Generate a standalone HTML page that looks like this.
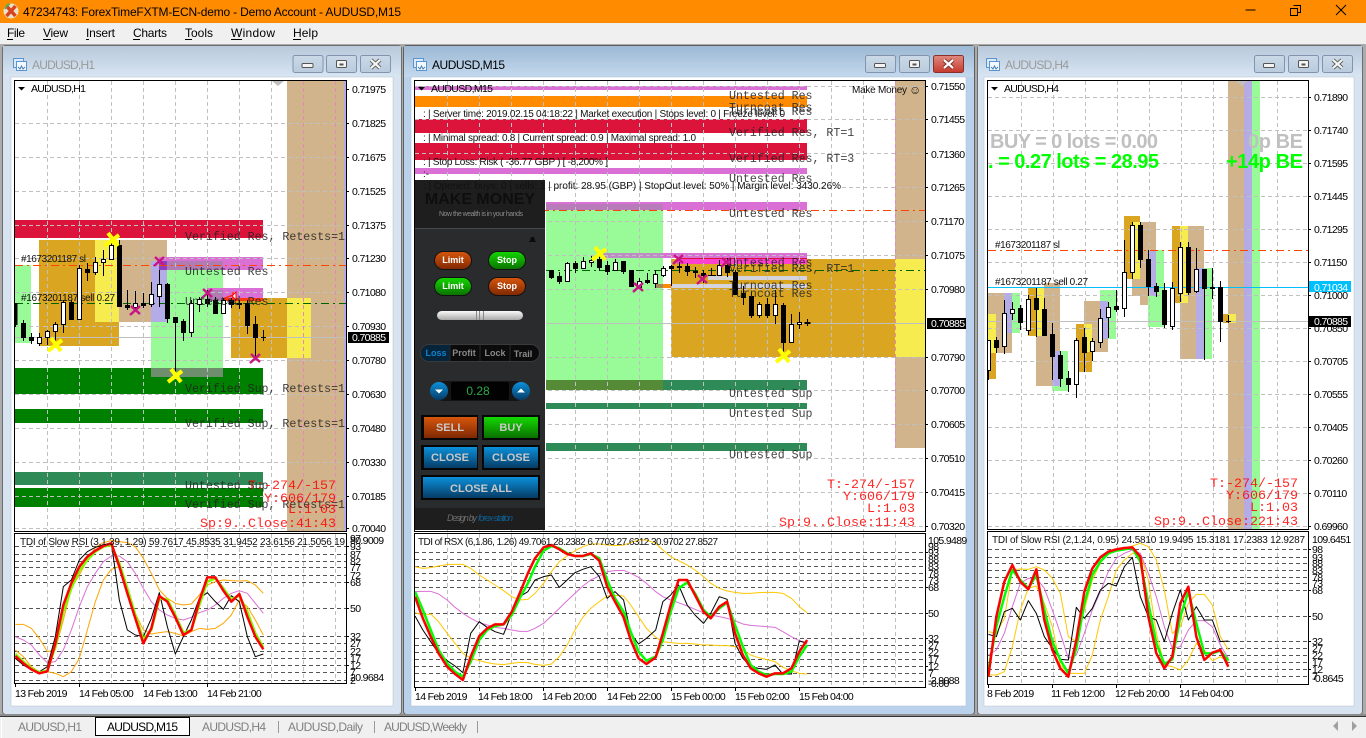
<!DOCTYPE html>
<html><head><meta charset="utf-8"><title>MT4</title>
<style>
html,body{margin:0;padding:0;background:#ababab;overflow:hidden}
svg{display:block}
text{font-family:"Liberation Sans",sans-serif}
.t{font-size:10.5px;letter-spacing:-.65px;fill:#000}
.w{font-size:10.5px;letter-spacing:-.65px;fill:#fff}
.o{font-size:10px;fill:#111}
.m{font-family:"Liberation Mono",monospace;font-size:11.6px;fill:#222;fill-opacity:.85}
.r{font-family:"Liberation Mono",monospace;font-size:13.33px;fill:#f00;fill-opacity:.85;text-anchor:end}
.mn{font-size:12px;fill:#000}
.g{fill:none;stroke:#c0c0c0;stroke-width:1;stroke-dasharray:4 3}
.d{fill:none;stroke:#555;stroke-width:1;stroke-dasharray:4 3}
.k{fill:none;stroke:#000;stroke-width:1}
.b{fill:#000;stroke:#000;stroke-width:1}
.h{fill:#fff;stroke:#000;stroke-width:1}
polyline{fill:none;vector-effect:non-scaling-stroke;stroke-linejoin:round}
.p1{font-size:9px;font-weight:bold;fill:#fff;text-anchor:middle}
.p2{font-size:11px;font-weight:bold;fill:#c8c8c8;text-anchor:middle}
</style></head><body>
<svg width="1366" height="738" viewBox="0 0 1366 738" xmlns="http://www.w3.org/2000/svg">
<defs>
<linearGradient id="ti" x1="0" y1="0" x2="0" y2="1"><stop offset="0" stop-color="#b8c9da"/><stop offset="1" stop-color="#d8e5f3"/></linearGradient>
<linearGradient id="ta" x1="0" y1="0" x2="0" y2="1"><stop offset="0" stop-color="#9cb8d4"/><stop offset="1" stop-color="#c4d9ee"/></linearGradient>
<linearGradient id="bt" x1="0" y1="0" x2="0" y2="1"><stop offset="0" stop-color="#ccd9e7"/><stop offset="1" stop-color="#b9cbdd"/></linearGradient>
<linearGradient id="bc" x1="0" y1="0" x2="0" y2="1"><stop offset="0" stop-color="#e08a80"/><stop offset="1" stop-color="#c63a2c"/></linearGradient>
<linearGradient id="red" x1="0" y1="0" x2="0" y2="1"><stop offset="0" stop-color="#d8560c"/><stop offset="1" stop-color="#7e2802"/></linearGradient>
<linearGradient id="grn" x1="0" y1="0" x2="0" y2="1"><stop offset="0" stop-color="#14d800"/><stop offset="1" stop-color="#0a7000"/></linearGradient>
<linearGradient id="blu" x1="0" y1="0" x2="0" y2="1"><stop offset="0" stop-color="#0b90da"/><stop offset="1" stop-color="#063c66"/></linearGradient>
<linearGradient id="sl" x1="0" y1="0" x2="0" y2="1"><stop offset="0" stop-color="#fafafa"/><stop offset="1" stop-color="#a8a8a8"/></linearGradient>
<g id="ic"><rect x="0.5" y="0.5" width="10" height="9" fill="#dbeafa" stroke="#5a95d0"/><rect x="3.5" y="3.5" width="10" height="9" fill="#f2f8fe" stroke="#5a95d0"/><path d="M5 9l2 2 1.500-3 1.500 3 2-2" fill="none" stroke="#4a7fb8"/></g>
<g id="bm"><rect x=".5" y=".5" width="30" height="17" rx="2" fill="url(#bt)" stroke="#8293ad"/><rect x="9.500" y="8.500" width="11" height="4" rx="1" fill="#f4f4f4" stroke="#555"/></g>
<g id="bx"><rect x=".5" y=".5" width="30" height="17" rx="2" fill="url(#bt)" stroke="#8293ad"/><rect x="10.500" y="5.500" width="10" height="7" rx="1" fill="#f4f4f4" stroke="#555"/><rect x="13.500" y="8.500" width="4" height="2" fill="#555"/></g>
<g id="bc1"><rect x=".5" y=".5" width="30" height="17" rx="2" fill="url(#bt)" stroke="#8293ad"/><path d="M11 5l9 8M20 5l-9 8" stroke="#555" stroke-width="4"/><path d="M11 5l9 8M20 5l-9 8" stroke="#f4f4f4" stroke-width="2.200"/></g>
<g id="bc2"><rect x=".5" y=".5" width="30" height="17" rx="2" fill="url(#bc)" stroke="#8a3028"/><path d="M11 5l9 8M20 5l-9 8" stroke="#7a2a22" stroke-width="4"/><path d="M11 5l9 8M20 5l-9 8" stroke="#fff" stroke-width="2.200"/></g>
<path id="xy" d="M-7 6L7-5M-4-7L6 6" fill="none" stroke="#ff0" stroke-width="4"/>
<path id="xm" d="M-5 5L5-4M-4-4L5 4" fill="none" stroke="#c71585" stroke-width="2.500"/>
<clipPath id="c3"><rect x="988" y="81" width="320" height="448"/></clipPath>
</defs>

<!-- background / chrome -->
<rect width="1366" height="738" fill="#ababab"/>
<rect width="1366" height="23" fill="#ff8c00"/>
<circle cx="11" cy="11" r="7.500" fill="#e9e2c8"/><path d="M6.500 6l9 10M15.500 6l-9 10" stroke="#d8431e" stroke-width="3.500"/><path d="M5 9a7 7 0 0 1 5-5" stroke="#6aa84f" stroke-width="2" fill="none"/>
<text x="23" y="16" font-size="12" textLength="378" lengthAdjust="spacing">47234743: ForexTimeFXTM-ECN-demo - Demo Account - AUDUSD,M15</text>
<path d="M1245.500 10h10" stroke="#000"/><path d="M1293.500 5.500h7v7h-3M1290.500 8.500h7v7h-7z" fill="none" stroke="#000"/><path d="M1336 5l10 10M1346 5l-10 10" stroke="#000"/>
<rect y="23" width="1366" height="21" fill="#f0f0f0"/>
<text class="mn" x="7" y="37" textLength="18">File</text><text class="mn" x="43" y="37" textLength="25">View</text><text class="mn" x="86" y="37" textLength="29">Insert</text><text class="mn" x="133" y="37" textLength="34">Charts</text><text class="mn" x="185" y="37" textLength="28">Tools</text><text class="mn" x="231" y="37" textLength="44">Window</text><text class="mn" x="293" y="37" textLength="25">Help</text>
<path d="M7 39.500h6M43 39.500h8M86 39.500h3M133 39.500h7M185 39.500h7M231 39.500h11M293 39.500h8" stroke="#000"/>

<!-- WINDOW 1 -->
<rect x="2.500" y="45.500" width="399" height="669" rx="3" fill="#d7e3f1" stroke="#6e6e6e"/>
<rect x="3" y="46" width="398" height="31" fill="url(#ti)"/>
<rect x="11" y="77" width="382" height="629" fill="#fff" stroke="#b4c0ce" stroke-width=".5"/>
<use href="#ic" x="13" y="58"/>
<text x="32" y="69" font-size="12" fill="#9a9a9a" textLength="63">AUDUSD,H1</text>
<use href="#bm" x="292.500" y="55"/><use href="#bx" x="326" y="55"/><use href="#bc1" x="360" y="55"/>

<!-- chart1 zones -->
<rect x="287" y="81" width="57" height="450" fill="#d2b48c"/><rect x="344" y="81" width="2" height="450" fill="#b4ace6"/>
<rect x="15" y="220" width="248" height="18" fill="#dc143c"/>
<rect x="15" y="265" width="16" height="78" fill="#98fb98"/>
<rect x="39" y="240" width="80" height="106" fill="#daa520"/>
<rect x="95" y="240" width="24" height="82" fill="#f7ec4f"/>
<rect x="119" y="240" width="48" height="82" fill="#d2b48c"/>
<rect x="151" y="261" width="72" height="116" fill="#98fb98"/>
<rect x="151" y="261" width="16" height="61" fill="#b4ace6"/>
<rect x="231" y="298" width="56" height="60" fill="#daa520"/><rect x="287" y="298" width="24" height="60" fill="#f7ec4f"/>
<rect x="159" y="257" width="104" height="13" fill="#da70d6"/>
<rect x="159" y="261" width="8" height="9" fill="#8b3fc0"/><rect x="167" y="261" width="56" height="9" fill="#b07cb4"/>
<rect x="207" y="288" width="56" height="13" fill="#da70d6"/><rect x="207" y="290" width="16" height="11" fill="#b07cb4"/><rect x="223" y="298" width="40" height="3" fill="#ff3a10"/>
<rect x="15" y="368" width="248" height="26" fill="#008000"/><rect x="151" y="368" width="72" height="9" fill="#6e8e6e"/>
<rect x="15" y="409" width="248" height="14" fill="#008000"/>
<rect x="15" y="472" width="248" height="13" fill="#2e8b57"/>
<rect x="15" y="488" width="248" height="19" fill="#008000"/>
<path class="g" d="M47.500 81V531M79.500 81V531M111.500 81V531M143.500 81V531M175.500 81V531M207.500 81V531M239.500 81V531M271.500 81V531M15 123.500H346M15 157.500H346M15 191.500H346M15 225.500H346M15 258.500H346M15 292.500H346M15 326.500H346M15 360.500H346M15 394.500H346M15 428.500H346M15 462.500H346M15 496.500H346M15 528.500H346"/>
<path d="M303.500 81V531M335.500 81V531" fill="none" stroke="#e38ab8" stroke-dasharray="4 3"/>
<path d="M272 81h12l-6 5z" fill="#c0c0c0"/>
<path d="M15 265.500H346" stroke="#ff4500" stroke-dasharray="8 4 2 4" fill="none"/>
<path d="M15 303.500H346" stroke="#006400" stroke-dasharray="8 4 2 4" fill="none"/>
<path d="M15 337.500H346" stroke="#c0c0c0"/>
<path d="M223 299l10-4M233 292v8" stroke="#ff2a10" stroke-width="1.500" fill="none"/><path d="M236 292l-4 4 4 4z" fill="#fff" stroke="#f00"/>
<path class="k" d="M15.500 303V327M23.500 320V341M31.500 333V344M39.500 333V346M47.500 330V345M55.500 322V343M63.500 300V333M71.500 300V320M79.500 265V320M87.500 263V281M95.500 257V275M103.500 250V276M111.500 240V250M119.500 240V307M127.500 290V310M135.500 291V310M143.500 293V308M151.500 282V307M159.500 270V307M167.500 283V323M175.500 317V372M183.500 319V341M191.500 300V337M199.500 297V312M207.500 290V307M215.500 297V313M223.500 298V314M231.500 298V308M239.500 300V309M247.500 300V334M255.500 316V357M263.500 330V341"/>
<path class="h" d="M37.500 337.500h4v6h-4zM45.500 331.500h4v6h-4zM53.500 324.500h4v7h-4zM61.500 302.500h4v22h-4zM77.500 268.500h4v51h-4zM93.500 262.500h4v10h-4zM101.500 259.500h4v3h-4zM109.500 245.500h4v14h-4zM133.500 303.500h4v4h-4zM149.500 294.500h4v10h-4zM157.500 284.500h4v12h-4zM189.500 303.500h4v29h-4zM197.500 299.500h4v5h-4zM221.500 300.500h4v13h-4z"/>
<path class="b" d="M15 303.500h2v21h-2zM21.500 323.500h4v14h-4zM29.500 337.500h4v3h-4zM69.500 302.500h4v17h-4zM85.500 269.500h4v3h-4zM117.500 245.500h4v61h-4zM125.500 305.500h4v2h-4zM141.500 303.500h4v2h-4zM165.500 284.500h4v34h-4zM173.500 317.500h4v5h-4zM181.500 321.500h4v11h-4zM205.500 299.500h4v4h-4zM213.500 300.500h4v13h-4zM229.500 300.500h4v4h-4zM237.500 303.500h4v1h-4zM245.500 303.500h4v22h-4zM253.500 324.500h4v13h-4zM261 337.500h5z"/>
<use href="#xy" x="55" y="345"/><use href="#xy" x="112" y="240"/><use href="#xy" x="175" y="376"/>
<use href="#xm" x="135" y="310"/><use href="#xm" x="159" y="261"/><use href="#xm" x="207" y="293"/><use href="#xm" x="255" y="358"/>
<path d="M18 87h7l-3.500 3.500z" fill="#000"/>
<text x="31" y="92" class="t" textLength="55" style="letter-spacing:0">AUDUSD,H1</text>
<text class="o" x="21" y="262" textLength="65">#1673201187 sl</text><text class="o" x="21" y="301" textLength="94">#1673201187 sell 0.27</text>
<text class="m" x="185" y="240">Verified Res, Retests=1</text>
<text class="m" x="185" y="275">Untested Res</text>
<text class="m" x="185" y="305">Untested Res</text>
<text class="m" x="185" y="392">Verified Sup, Retests=1</text>
<text class="m" x="185" y="427">Verified Sup, Retests=1</text>
<text class="m" x="185" y="489">Untested Sup</text>
<text class="m" x="185" y="508">Verified Sup, Retests=1</text>
<text class="r" x="336" y="489">T:-274/-157</text><text class="r" x="336" y="502">Y:606/179</text><text class="r" x="336" y="513">L:1.03</text><text class="r" x="336" y="527">Sp:9..Close:41:43</text>
<rect x="14.500" y="80.500" width="332" height="451" class="k"/>
<path class="k" d="M346 89.500h3M346 123.500h3M346 157.500h3M346 191.500h3M346 225.500h3M346 258.500h3M346 292.500h3M346 326.500h3M346 360.500h3M346 394.500h3M346 428.500h3M346 462.500h3M346 496.500h3M346 528.500h3"/>
<g class="t"><text class="t" x="352" y="93">0.71975</text><text class="t" x="352" y="127">0.71825</text><text class="t" x="352" y="161">0.71675</text><text class="t" x="352" y="195">0.71525</text><text class="t" x="352" y="229">0.71375</text><text class="t" x="352" y="262">0.71230</text><text class="t" x="352" y="296">0.71080</text><text class="t" x="352" y="330">0.70930</text><text class="t" x="352" y="364">0.70780</text><text class="t" x="352" y="398">0.70630</text><text class="t" x="352" y="432">0.70480</text><text class="t" x="352" y="466">0.70330</text><text class="t" x="352" y="500">0.70185</text><text class="t" x="352" y="532">0.70040</text></g>
<rect x="348" y="332" width="41" height="11" fill="#000"/><text class="w" x="352" y="341">0.70885</text>
<!-- sub1 -->
<path class="g" d="M47.500 534V683M79.500 534V683M111.500 534V683M143.500 534V683M175.500 534V683M207.500 534V683M239.500 534V683M271.500 534V683M303.500 534V683M335.500 534V683"/>
<path class="d" d="M15 546.500H346M15 554.500H346M15 561.500H346M15 567.500H346M15 575.500H346M15 582.500H346M15 608.500H346M15 636.500H346M15 643.500H346M15 651.500H346M15 658.500H346M15 665.500H346M15 672.500H346M15 680.500H346"/>
<g transform="translate(0,530) scale(.33333)">
<polyline stroke="#ffa500" stroke-width="1" points="46,283 70,283 94,295 118,325 142,365 166,360 190,270 214,175 238,135 262,90 286,52 310,38 334,32 358,35 382,38 406,50 430,85 454,130 478,180 502,205 526,220 550,225 574,222 598,195 622,165 646,155 670,150 694,152 718,153 742,152 766,165 790,190"/>
<polyline stroke="#ffa500" stroke-width="1" points="46,360 70,380 94,410 118,425 142,425 166,430 190,440 214,425 238,385 262,300 286,215 310,150 334,118 358,110 382,170 406,250 430,300 454,312 478,308 502,305 526,310 550,318 574,305 598,295 622,298 646,295 670,280 694,255 718,210 742,230 766,270 790,315"/>
<polyline stroke="#da70d6" stroke-width="1" points="46,320 70,330 94,345 118,375 142,398 166,395 190,360 214,300 238,230 262,170 286,130 310,95 334,78 358,78 382,95 406,130 430,175 454,215 478,240 502,255 526,265 550,270 574,262 598,248 622,240 646,225 670,205 694,190 718,182 742,190 766,220 790,250"/>
<polyline stroke="#000" stroke-width="1" points="46,385 70,405 94,420 118,425 142,410 166,320 190,170 214,150 238,90 262,65 286,52 310,45 334,38 358,210 382,300 406,315 430,320 454,265 478,188 502,290 526,372 550,320 574,270 598,205 622,188 646,215 670,238 694,197 718,215 742,320 766,380 790,372"/>
<polyline stroke="#7cfc00" stroke-width="2.500" points="46,372 70,395 94,415 118,427 142,422 166,350 190,245 214,175 238,122 262,90 286,65 310,50 334,45 358,100 382,175 406,255 430,328 454,300 478,205 502,208 526,255 550,308 574,300 598,225 622,155 646,145 670,175 694,208 718,197 742,245 766,310 790,352"/>
<polyline stroke="#f00" stroke-width="2.500" points="46,378 70,400 94,418 118,430 142,424 166,340 190,225 214,160 238,110 262,80 286,62 310,48 334,40 358,110 382,190 406,265 430,340 454,295 478,198 502,215 526,262 550,315 574,300 598,212 622,142 646,142 670,182 694,215 718,192 742,260 766,320 790,358"/>
</g>
<text class="o" x="20" y="545" textLength="325">TDI of Slow RSI  (3,1.39, 1.29) 59.7617 45.8535 31.9452 23.6156 21.5056 19</text>
<rect x="14.500" y="533.500" width="332" height="150" class="k"/>
<path class="k" d="M15.500 684v3M79.500 684v3M143.500 684v3M207.500 684v3M346 546.500h3M346 582.500h3M346 608.500h3M346 636.500h3M346 665.500h3"/>
<text class="t" x="350" y="542">97</text><text class="t" x="350" y="544">80.9009</text><text class="t" x="350" y="550">93</text><text class="t" x="350" y="558">87</text><text class="t" x="350" y="565">82</text><text class="t" x="350" y="571">77</text><text class="t" x="350" y="579">72</text><text class="t" x="350" y="586">68</text><text class="t" x="350" y="612">50</text><text class="t" x="350" y="640">32</text><text class="t" x="350" y="647">27</text><text class="t" x="350" y="655">22</text><text class="t" x="350" y="662">17</text><text class="t" x="350" y="669">12</text><text class="t" x="350" y="676">7</text><text class="t" x="350" y="681">20.9684</text><text class="t" x="350" y="684">2</text>
<text class="t" x="15" y="697">13 Feb 2019</text><text class="t" x="79" y="697">14 Feb 05:00</text><text class="t" x="143" y="697">14 Feb 13:00</text><text class="t" x="207" y="697">14 Feb 21:00</text>

<!-- WINDOW 2 -->
<rect x="403.500" y="45.500" width="571" height="669" rx="3" fill="#b9d1ea" stroke="#5f5f5f"/>
<rect x="404" y="46" width="570" height="31" fill="url(#ta)"/>
<rect x="411" y="77" width="555" height="629" fill="#fff" stroke="#a8bcd2" stroke-width=".5"/>
<use href="#ic" x="413" y="58"/>
<text x="432" y="69" font-size="12" fill="#000" textLength="73">AUDUSD,M15</text>
<use href="#bm" x="865" y="55"/><use href="#bx" x="899" y="55"/><use href="#bc2" x="933" y="55"/>

<rect x="895" y="81" width="30" height="367" fill="#d2b48c"/>
<rect x="671" y="259" width="224" height="98" fill="#daa520"/><rect x="895" y="259" width="30" height="98" fill="#f7ec4f"/>
<rect x="415" y="86" width="392" height="4" fill="#da70d6"/>
<rect x="415" y="96" width="392" height="11" fill="#ff8c00"/>
<rect x="415" y="119" width="392" height="14" fill="#dc143c"/>
<rect x="415" y="143" width="392" height="17" fill="#dc143c"/>
<rect x="415" y="168" width="392" height="6" fill="#da70d6"/>
<rect x="546" y="210" width="117" height="170" fill="#98fb98"/>
<rect x="546" y="202" width="261" height="8" fill="#da70d6"/>
<rect x="546" y="204" width="117" height="6" fill="#b97cba"/>
<rect x="546" y="380" width="261" height="10" fill="#2e8b57"/><rect x="546" y="380" width="117" height="10" fill="#558b36"/>
<rect x="546" y="403" width="261" height="6" fill="#2e8b57"/>
<rect x="546" y="443" width="261" height="8" fill="#2e8b57"/>
<rect x="600" y="253" width="207" height="5" fill="#da70d6"/><rect x="600" y="253" width="63" height="5" fill="#bd8cc4"/>
<rect x="677" y="258" width="130" height="6" fill="#ff40d0"/><path d="M677 258.500H807" stroke="#dc143c"/>
<rect x="708" y="276" width="99" height="4" fill="#d4d4de"/>
<rect x="671" y="284" width="136" height="4" fill="#d4d4de"/><rect x="663" y="284" width="8" height="4" fill="#ff8c00"/><rect x="656" y="284" width="7" height="4" fill="#a08a5a"/>
<path class="g" d="M447.500 81V531M479.500 81V531M511.500 81V531M543.500 81V531M575.500 81V531M607.500 81V531M639.500 81V531M671.500 81V531M703.500 81V531M735.500 81V531M767.500 81V531M799.500 81V531M831.500 81V531M863.500 81V531M415 86.500H925M415 119.500H925M415 153.500H925M415 187.500H925M415 221.500H925M415 255.500H925M415 289.500H925M415 357.500H925M415 390.500H925M415 424.500H925M415 458.500H925M415 492.500H925M415 526.500H925"/>
<path d="M895.500 81V448" fill="none" stroke="#e38ab8" stroke-dasharray="4 3"/>
<path d="M415 210.500H925" stroke="#ff4500" stroke-dasharray="8 4 2 4" fill="none"/>
<path d="M546 270.500H925" stroke="#006400" stroke-dasharray="8 4 2 4" fill="none"/>
<path d="M546 323.500H925" stroke="#c0c0c0"/>
<path class="k" d="M551.500 270V279M559.500 272V284M567.500 262V281M575.500 261V273M583.500 257V269M591.500 256V267M599.500 255V271M607.500 261V275M615.500 259V271M623.500 261V274M631.500 270V286M639.500 278V289M647.500 273V284M655.500 270V288M663.500 266V277M671.500 265V286M679.500 262V273M687.500 263V276M695.500 267V278M703.500 270V283M711.500 268V276M719.500 260V276M727.500 258V277M735.500 270V295M743.500 286V305M751.500 292V318M759.500 302V318M767.500 298V318M775.500 290V324M783.500 303V354M791.500 314V343M799.500 312V329M807.500 319V326M708 275.500h8"/>
<path class="h" d="M565.500 263.500h4v18h-4zM581.500 261.500h4v7h-4zM589.500 260.500h4v2h-4zM613.500 262.500h4v8h-4zM637.500 281.500h4v6h-4zM653.500 274.500h4v9h-4zM661.500 268.500h4v7h-4zM717.500 265.500h4v10h-4zM757.500 304.500h4v11h-4zM773.500 304.500h4v11h-4zM789.500 324.500h4v18h-4zM797.500 322.500h4v2h-4z"/>
<path class="b" d="M549.500 270.500h4v7h-4zM557.500 276.500h4v5h-4zM573.500 263.500h4v5h-4zM597.500 259.500h4v8h-4zM605.500 265.500h4v6h-4zM621.500 261.500h4v10h-4zM629.500 270.500h4v16h-4zM645.500 280.500h4v2h-4zM669.500 266.500h4v2h-4zM677.500 266.500h4v1h-4zM685.500 266.500h4v5h-4zM693.500 271.500h4v1h-4zM701.500 273.500h4v2h-4zM725.500 265.500h4v7h-4zM733.500 272.500h4v22h-4zM741.500 293.500h4v4h-4zM749.500 296.500h4v19h-4zM765.500 304.500h4v11h-4zM781.500 305.500h4v37h-4zM805 322.500h5v1h-5z"/>
<use href="#xy" x="599" y="254"/><use href="#xy" x="783" y="356"/>
<use href="#xm" x="638" y="287"/><use href="#xm" x="678" y="259"/><use href="#xm" x="702" y="279"/><use href="#xm" x="726" y="262"/>

<!-- panel -->
<rect x="415" y="180" width="130" height="350" fill="#1e1e1f"/>
<rect x="415" y="229" width="130" height="279" fill="#2a2b2d"/>
<path d="M415 228.500h130" stroke="#4a4a4c"/>
<text x="480" y="204" font-size="16" font-weight="bold" fill="#0e0e0e" text-anchor="middle">MAKE MONEY</text>
<text x="439" y="216" font-size="7" fill="#8a8a8a" textLength="84">Now the wealth is in your hands</text>
<path d="M531 237h3l1 4h1v1h-7v-1h1z" fill="#0c0c0c"/>
<rect x="434.500" y="251.500" width="37" height="18" rx="9" fill="url(#red)" stroke="#111"/><text class="p1" x="453" y="263">Limit</text>
<rect x="488.500" y="251.500" width="37" height="18" rx="9" fill="url(#grn)" stroke="#111"/><text class="p1" x="507" y="263">Stop</text>
<rect x="434.500" y="277.500" width="37" height="18" rx="9" fill="url(#grn)" stroke="#111"/><text class="p1" x="453" y="289">Limit</text>
<rect x="488.500" y="277.500" width="37" height="18" rx="9" fill="url(#red)" stroke="#111"/><text class="p1" x="507" y="289">Stop</text>
<rect x="437" y="311" width="86" height="9" rx="4.500" fill="url(#sl)"/><path d="M476.500 311v9M479.500 311v9M483.500 311v9" stroke="#888"/>
<rect x="420.500" y="344.500" width="119" height="17" rx="8.500" fill="#0b0b0c" stroke="#3a3a3c"/>
<path d="M421 353a8 8 0 0 1 8-8h21v16h-21a8 8 0 0 1-8-8z" fill="#06243a"/>
<path d="M450 345v16M480 345v16M510 345v16" stroke="#2a2a2c"/>
<text x="436" y="356" font-size="9" font-weight="bold" fill="#0a84d0" text-anchor="middle">Loss</text><text x="464" y="356" font-size="9" font-weight="bold" fill="#8a8a8a" text-anchor="middle">Profit</text><text x="495" y="356" font-size="9" font-weight="bold" fill="#8a8a8a" text-anchor="middle">Lock</text><text x="523" y="357" font-size="9" font-weight="bold" fill="#8a8a8a" text-anchor="middle">Trail</text>
<rect x="434" y="381" width="92" height="20" rx="10" fill="#151516"/>
<rect x="451" y="382" width="58" height="18" rx="2" fill="#020202"/>
<text x="478" y="395" font-size="12" fill="#2ca84a" text-anchor="middle">0.28</text>
<circle cx="439" cy="391" r="9" fill="url(#blu)"/><path d="M435 389.500h8l-4 4z" fill="#fff"/>
<circle cx="521" cy="391" r="9" fill="url(#blu)"/><path d="M517 392.500h8l-4-4z" fill="#fff"/>
<rect x="421" y="415" width="57" height="25" fill="#060606"/><rect x="424" y="417" width="53" height="21" fill="url(#red)"/><text class="p2" x="450" y="431">SELL</text>
<rect x="482" y="415" width="58" height="25" fill="#060606"/><rect x="484" y="417" width="54" height="21" fill="url(#grn)"/><text class="p2" x="511" y="431">BUY</text>
<rect x="421" y="445" width="57" height="25" fill="#060606"/><rect x="424" y="447" width="53" height="21" fill="url(#blu)"/><text class="p2" x="450" y="461">CLOSE</text>
<rect x="482" y="445" width="58" height="25" fill="#060606"/><rect x="484" y="447" width="54" height="21" fill="url(#blu)"/><text class="p2" x="511" y="461">CLOSE</text>
<rect x="421" y="475" width="119" height="25" fill="#060606"/><rect x="423" y="477" width="115" height="21" fill="url(#blu)"/><text class="p2" x="481" y="492">CLOSE ALL</text>
<rect x="415" y="508" width="130" height="22" fill="#1e1e1f"/>
<text x="447" y="521" font-family="Liberation Serif" font-style="italic" font-size="9" fill="#6e6e6e" textLength="30">Design by</text><text x="478" y="521" font-family="Liberation Serif" font-style="italic" font-size="9" fill="#0f5d90" textLength="35">forex-station</text>

<!-- overlay text -->
<text class="o" x="423" y="117" textLength="362">: |  Server time: 2019.02.15 04:18:22  | Market execution | Stops level: 0 | Freeze level: 0</text>
<text class="o" x="423" y="141" textLength="273">: | Minimal spread: 0.8 | Current spread: 0.9 | Maximal spread: 1.0</text>
<text class="o" x="423" y="165" textLength="185">: | Stop Loss: Risk ( -36.77 GBP ) [ -8,200% ]</text>
<text class="o" x="423" y="177">:-</text>
<text class="o" x="423" y="189" textLength="418">: | Opened: buys: 0  | sells: 1  | profit: 28.95 (GBP) | StopOut level: 50% | Margin level: 3430.26%</text>
<path d="M418 87h7l-3.500 3.500z" fill="#000"/>
<text x="431" y="92" class="t" textLength="62" style="letter-spacing:0">AUDUSD,M15</text>
<text class="o" x="852" y="93" textLength="55">Make Money</text><text x="909" y="94" font-family="DejaVu Sans" font-size="12" fill="#111">☺</text>
<text class="m" x="729" y="99">Untested Res</text><text class="m" x="729" y="111">Turncoat Res</text><text class="m" x="729" y="115">Turncoat Res</text><text class="m" x="729" y="136">Verified Res, RT=1</text><text class="m" x="729" y="162">Verified Res, RT=3</text><text class="m" x="729" y="182">Untested Res</text><text class="m" x="729" y="217">Untested Res</text><text class="m" x="729" y="266">Untested Res</text><text class="m" x="729" y="272">Verified Res, RT=1</text><text class="m" x="729" y="289">Turncoat Res</text><text class="m" x="729" y="297">Turncoat Res</text><text class="m" x="729" y="397">Untested Sup</text><text class="m" x="729" y="417">Untested Sup</text><text class="m" x="729" y="458">Untested Sup</text>
<text class="r" x="915" y="488">T:-274/-157</text><text class="r" x="915" y="500">Y:606/179</text><text class="r" x="915" y="512">L:1.03</text><text class="r" x="915" y="526">Sp:9..Close:11:43</text>
<rect x="414.500" y="80.500" width="511" height="451" class="k"/>
<path class="k" d="M925 86.500h3M925 119.500h3M925 153.500h3M925 187.500h3M925 221.500h3M925 255.500h3M925 289.500h3M925 357.500h3M925 390.500h3M925 424.500h3M925 458.500h3M925 492.500h3M925 526.500h3"/>
<text class="t" x="931" y="90">0.71550</text><text class="t" x="931" y="123">0.71455</text><text class="t" x="931" y="158">0.71360</text><text class="t" x="931" y="191">0.71265</text><text class="t" x="931" y="225">0.71170</text><text class="t" x="931" y="259">0.71075</text><text class="t" x="931" y="293">0.70980</text><text class="t" x="931" y="361">0.70790</text><text class="t" x="931" y="394">0.70700</text><text class="t" x="931" y="428">0.70605</text><text class="t" x="931" y="462">0.70510</text><text class="t" x="931" y="496">0.70415</text><text class="t" x="931" y="530">0.70320</text>
<rect x="927" y="318" width="39" height="11" fill="#000"/><text class="w" x="931" y="327">0.70885</text>
<!-- sub2 -->
<path class="g" d="M447.500 534V687M479.500 534V687M511.500 534V687M543.500 534V687M575.500 534V687M607.500 534V687M639.500 534V687M671.500 534V687M703.500 534V687M735.500 534V687M767.500 534V687M799.500 534V687M831.500 534V687M863.500 534V687M895.500 534V687"/>
<path class="d" d="M415 552.500H925M415 559.500H925M415 566.500H925M415 573.500H925M415 580.500H925M415 587.500H925M415 613.500H925M415 638.500H925M415 645.500H925M415 652.500H925M415 659.500H925M415 666.500H925M415 673.500H925M415 681.500H925"/>
<g transform="translate(410,530) scale(.35714,.33333)">
<polyline stroke="#ffc800" stroke-width="1" points="14,110 36,115 58,113 80,108 104,104 126,103 148,103 170,115 194,135 216,150 238,165 262,182 285,200 307,210 330,208 350,190 374,160 396,125 418,95 440,78 462,62 484,50 506,42 530,42 552,45 574,47 598,45 618,38 640,30 662,30 688,40 708,60 730,80 752,92 776,105 798,120 822,140 842,160 866,175 888,183 910,187 932,190 954,190 976,188 998,187 1022,187 1044,190 1068,205 1090,230 1112,248"/>
<polyline stroke="#ffc800" stroke-width="1" points="14,248 36,255 58,252 80,275 104,310 126,340 148,370 170,385 194,392 216,398 238,402 262,404 285,400 307,397 330,398 350,403 374,406 396,402 418,380 440,345 462,300 484,262 506,235 530,215 552,198 574,196 598,198 618,225 640,260 662,295 688,322 708,335 730,338 752,340 776,340 798,342 822,345 842,345 866,347 888,347 910,350 932,360 954,375 976,383 998,388 1022,395 1044,412 1068,422 1090,430 1112,432"/>
<polyline stroke="#da70d6" stroke-width="1" points="14,185 36,184 58,184 80,192 104,210 126,232 148,250 170,265 194,278 216,285 238,292 262,295 285,300 307,304 330,304 350,295 374,280 396,258 418,235 440,212 462,190 484,168 506,150 530,138 552,125 574,122 598,121 618,130 640,142 662,160 688,185 708,200 730,210 752,218 776,228 798,238 822,248 842,255 866,260 888,265 910,272 932,282 954,286 976,288 998,290 1022,292 1044,305 1068,320 1090,332 1112,338"/>
<polyline stroke="#000" stroke-width="1" points="14,258 36,300 58,335 80,370 104,392 126,408 148,428 170,310 194,275 216,292 238,305 262,313 285,250 307,200 330,185 350,150 374,140 396,135 418,172 440,150 462,128 484,118 506,110 530,140 552,205 574,185 598,210 618,310 640,342 662,325 688,300 708,215 730,195 752,165 776,225 798,255 822,280 842,250 866,200 888,208 910,340 932,385 954,410 976,415 998,418 1022,405 1044,432 1068,432 1090,333 1112,340"/>
<polyline stroke="#00ff00" stroke-width="2.500" points="14,185 36,240 58,300 80,360 104,400 126,425 148,440 170,395 194,330 216,300 238,288 262,283 285,255 307,205 330,160 350,110 374,62 396,48 418,55 440,70 462,78 484,78 506,72 530,85 552,150 574,205 598,245 618,305 640,365 662,392 688,380 708,330 730,245 752,175 776,157 798,190 822,240 842,260 866,235 888,218 910,285 932,350 954,405 976,425 998,435 1022,432 1044,432 1068,425 1090,380 1112,345"/>
<polyline stroke="#f00" stroke-width="2.500" points="14,200 36,265 58,320 80,370 104,410 126,432 148,450 170,380 194,318 216,295 238,283 262,283 285,245 307,190 330,130 350,85 374,52 396,45 418,58 440,72 462,78 484,78 506,70 530,92 552,170 574,215 598,262 618,330 640,385 662,402 688,382 708,310 730,225 752,150 776,150 798,195 822,245 842,265 866,230 888,215 910,310 932,375 954,415 976,430 998,440 1022,430 1044,430 1068,415 1090,365 1112,330"/>
</g>
<text class="o" x="418" y="545" textLength="300">TDI of RSX  (6,1.86, 1.26) 49.7061 28.2382 6.7703 27.6312 30.9702 27.8527</text>
<rect x="414.500" y="533.500" width="511" height="154" class="k"/>
<path class="k" d="M415.500 688v3M479.500 688v3M543.500 688v3M607.500 688v3M671.500 688v3M735.500 688v3M799.500 688v3M925 552.500h3M925 587.500h3M925 613.500h3M925 638.500h3M925 666.500h3"/>
<text class="t" x="928" y="544">105.9489</text><text class="t" x="928" y="550">98</text><text class="t" x="928" y="556">93</text><text class="t" x="928" y="563">88</text><text class="t" x="928" y="570">83</text><text class="t" x="928" y="577">78</text><text class="t" x="928" y="584">73</text><text class="t" x="928" y="591">68</text><text class="t" x="928" y="617">50</text><text class="t" x="928" y="642">32</text><text class="t" x="928" y="649">27</text><text class="t" x="928" y="656">22</text><text class="t" x="928" y="663">17</text><text class="t" x="928" y="670">12</text><text class="t" x="928" y="677">7</text><text class="t" x="928" y="684">-2.9088</text><text class="t" x="928" y="687">-0.00</text>
<text class="t" x="415" y="700">14 Feb 2019</text><text class="t" x="478" y="700">14 Feb 18:00</text><text class="t" x="542" y="700">14 Feb 20:00</text><text class="t" x="607" y="700">14 Feb 22:00</text><text class="t" x="671" y="700">15 Feb 00:00</text><text class="t" x="735" y="700">15 Feb 02:00</text><text class="t" x="799" y="700">15 Feb 04:00</text>

<!-- WINDOW 3 -->
<rect x="977.500" y="45.500" width="385" height="669" rx="3" fill="#d7e3f1" stroke="#6e6e6e"/>
<rect x="978" y="46" width="384" height="31" fill="url(#ti)"/>
<rect x="984" y="77" width="370" height="629" fill="#fff" stroke="#b4c0ce" stroke-width=".5"/>
<use href="#ic" x="986" y="58"/>
<text x="1005" y="69" font-size="12" fill="#9a9a9a" textLength="64">AUDUSD,H4</text>
<use href="#bm" x="1254" y="55"/><use href="#bx" x="1288" y="55"/><use href="#bc1" x="1322" y="55"/>
<g clip-path="url(#c3)">
<rect x="1228" y="81" width="16" height="448" fill="#d2b48c"/><rect x="1244" y="81" width="8" height="448" fill="#b4ace6"/><rect x="1252" y="81" width="8" height="448" fill="#98fb98"/>
<rect x="1223" y="314" width="5" height="9" fill="#daa520"/><rect x="1228" y="314" width="8" height="9" fill="#f7ec4f"/>
<rect x="988" y="293" width="16" height="60" fill="#d2b48c"/><rect x="1004" y="293" width="8" height="60" fill="#d2b48c"/><rect x="1004" y="293" width="8" height="40" fill="#b4ace6"/><rect x="1012" y="293" width="8" height="40" fill="#98fb98"/>
<rect x="988" y="314" width="8" height="39" fill="#f7ec4f"/><rect x="988" y="353" width="8" height="26" fill="#daa520"/>
<rect x="1028" y="288" width="8" height="48" fill="#daa520"/><rect x="1036" y="288" width="8" height="48" fill="#f7ec4f"/><rect x="1044" y="283" width="16" height="103" fill="#d2b48c"/><rect x="1036" y="336" width="16" height="50" fill="#d2b48c"/><rect x="1052" y="351" width="16" height="40" fill="#98fb98"/><rect x="1052" y="351" width="8" height="35" fill="#b4ace6"/>
<rect x="1076" y="324" width="16" height="48" fill="#daa520"/><rect x="1084" y="324" width="8" height="28" fill="#f7ec4f"/><rect x="1084" y="301" width="16" height="23" fill="#d2b48c"/><rect x="1092" y="324" width="16" height="28" fill="#d2b48c"/><rect x="1100" y="290" width="16" height="49" fill="#98fb98"/><rect x="1100" y="301" width="8" height="38" fill="#b4ace6"/>
<rect x="1124" y="216" width="8" height="63" fill="#daa520"/><rect x="1132" y="216" width="8" height="6" fill="#daa520"/><rect x="1132" y="222" width="8" height="57" fill="#f7ec4f"/><rect x="1140" y="222" width="16" height="83" fill="#d2b48c"/><rect x="1132" y="279" width="16" height="17" fill="#d2b48c"/><rect x="1148" y="250" width="8" height="46" fill="#b4ace6"/><rect x="1156" y="250" width="8" height="77" fill="#98fb98"/><rect x="1148" y="296" width="16" height="31" fill="#98fb98"/>
<rect x="1172" y="226" width="8" height="77" fill="#daa520"/><rect x="1180" y="226" width="8" height="77" fill="#f7ec4f"/><rect x="1188" y="226" width="16" height="42" fill="#d2b48c"/><rect x="1180" y="303" width="16" height="56" fill="#d2b48c"/><rect x="1188" y="268" width="8" height="91" fill="#d2b48c"/><rect x="1196" y="268" width="8" height="91" fill="#b4ace6"/><rect x="1204" y="268" width="8" height="91" fill="#98fb98"/>
<path class="g" d="M1021.500 81V529M1053.500 81V529M1085.500 81V529M1117.500 81V529M1149.500 81V529M1181.500 81V529M1213.500 81V529M1277.500 81V529M988 97.500H1308M988 130.500H1308M988 163.500H1308M988 196.500H1308M988 229.500H1308M988 262.500H1308M988 295.500H1308M988 328.500H1308M988 361.500H1308M988 394.500H1308M988 427.500H1308M988 460.500H1308M988 493.500H1308M988 526.500H1308"/>
<path d="M1245.500 81V529" fill="none" stroke="#c8a0c8" stroke-dasharray="4 3"/>
<path d="M1236 81h12l-6 5z" fill="#c0c0c0"/>
<path d="M988 250.500H1308" stroke="#ff4500" stroke-dasharray="8 4 2 4" fill="none"/>
<path d="M988 287.500H1308" stroke="#00bfff"/>
<path d="M988 321.500H1308" stroke="#c0c0c0"/>
<path class="k" d="M988.500 340V380M996.500 337V353M1004.500 300V354M1012.500 302V320M1020.500 305V330M1028.500 295V335M1036.500 288V337M1044.500 298V336M1052.500 323V380M1060.500 351V387M1068.500 371V392M1076.500 338V398M1084.500 328V372M1092.500 338V361M1100.500 309V348M1108.500 302V338M1116.500 290V312M1124.500 240V317M1132.500 222V279M1140.500 222V268M1148.500 250V296M1156.500 283V297M1164.500 283V328M1172.500 282V330M1180.500 242V302M1188.500 242V295M1196.500 248V293M1204.500 269V360M1212.500 268V299M1220.500 281V342M1228.500 315V323"/>
<path class="h" d="M986.500 340.500h4v30h-4zM1002.500 313.500h4v33h-4zM1010.500 309.500h4v4h-4zM1026.500 299.500h4v31h-4zM1074.500 340.500h4v44h-4zM1090.500 341.500h4v10h-4zM1098.500 318.500h4v24h-4zM1106.500 307.500h4v10h-4zM1122.500 272.500h4v36h-4zM1130.500 225.500h4v47h-4zM1170.500 288.500h4v38h-4zM1178.500 247.500h4v46h-4zM1194.500 269.500h4v22h-4z"/>
<path class="b" d="M994.500 340.500h4v7h-4zM1018.500 308.500h4v14h-4zM1034.500 298.500h4v11h-4zM1042.500 309.500h4v26h-4zM1050.500 334.500h4v22h-4zM1058.500 355.500h4v23h-4zM1066.500 378.500h4v6h-4zM1082.500 337.500h4v15h-4zM1114.500 306.500h4v3h-4zM1138.500 225.500h4v34h-4zM1146.500 259.500h4v27h-4zM1154.500 286.500h4v5h-4zM1162.500 290.500h4v34h-4zM1186.500 247.500h4v45h-4zM1202.500 269.500h4v19h-4zM1210.500 287.500h4v1h-4zM1218.500 287.500h4v34h-4zM1226 321.500h5z"/>
</g>
<path d="M991 87h7l-3.500 3.500z" fill="#000"/>
<text x="1004" y="92" class="t" textLength="55" style="letter-spacing:0">AUDUSD,H4</text>
<text x="990" y="148" font-size="20" font-weight="bold" fill="#c0c0c0" textLength="168">BUY = 0 lots = 0.00</text>
<text x="1248" y="148" font-size="20" font-weight="bold" fill="#c0c0c0" textLength="55">0p BE</text>
<text x="988" y="168" font-size="20" font-weight="bold" fill="#00ff00" textLength="171">. = 0.27 lots = 28.95</text>
<text x="1226" y="168" font-size="20" font-weight="bold" fill="#00ff00" textLength="77">+14p BE</text>
<text class="o" x="995" y="248" textLength="65">#1673201187 sl</text><text class="o" x="995" y="285" textLength="93">#1673201187 sell 0.27</text>
<text class="r" x="1298" y="487">T:-274/-157</text><text class="r" x="1298" y="499">Y:606/179</text><text class="r" x="1298" y="511">L:1.03</text><text class="r" x="1298" y="525">Sp:9..Close:221:43</text>
<rect x="987.500" y="80.500" width="321" height="449" class="k"/>
<path class="k" d="M1308 97.500h3M1308 130.500h3M1308 163.500h3M1308 196.500h3M1308 229.500h3M1308 262.500h3M1308 295.500h3M1308 328.500h3M1308 361.500h3M1308 394.500h3M1308 427.500h3M1308 460.500h3M1308 493.500h3M1308 526.500h3"/>
<text class="t" x="1314" y="101">0.71890</text><text class="t" x="1314" y="134">0.71740</text><text class="t" x="1314" y="167">0.71595</text><text class="t" x="1314" y="200">0.71445</text><text class="t" x="1314" y="233">0.71295</text><text class="t" x="1314" y="266">0.71150</text><text class="t" x="1314" y="299">0.71000</text><text class="t" x="1314" y="332">0.70850</text><text class="t" x="1314" y="365">0.70705</text><text class="t" x="1314" y="398">0.70555</text><text class="t" x="1314" y="431">0.70405</text><text class="t" x="1314" y="464">0.70260</text><text class="t" x="1314" y="497">0.70110</text><text class="t" x="1314" y="530">0.69960</text>
<rect x="1309" y="281" width="42" height="11" fill="#00bfff"/><text class="w" x="1314" y="291">0.71034</text>
<rect x="1309" y="316" width="42" height="11" fill="#000"/><text class="w" x="1314" y="325">0.70885</text>
<!-- sub3 -->
<path class="g" d="M1021.500 532V684M1053.500 532V684M1085.500 532V684M1117.500 532V684M1149.500 532V684M1181.500 532V684M1213.500 532V684M1245.500 532V684M1277.500 532V684"/>
<path class="d" d="M988 549.500H1308M988 557.500H1308M988 563.500H1308M988 570.500H1308M988 577.500H1308M988 583.500H1308M988 590.500H1308M988 616.500H1308M988 641.500H1308M988 648.500H1308M988 655.500H1308M988 662.500H1308M988 669.500H1308M988 676.500H1308"/>
<g transform="translate(975,340) scale(.33333)">
<polyline stroke="#ffc800" stroke-width="1" points="40,875 64,880 88,835 112,690 136,687 160,688 184,680 208,690 232,715 256,760 280,890 304,905 328,810 352,720 376,670 400,640 424,628 448,625 472,618 496,610 520,620 544,660 568,750 592,880 616,860 640,790 664,763 688,763 712,795 736,890 760,930"/>
<polyline stroke="#ffc800" stroke-width="1" points="40,1005 64,1005 88,995 112,920 136,810 160,745 184,738 208,790 232,860 256,975 280,1000 304,1000 328,1000 352,945 376,840 400,770 424,690 448,660 472,640 496,640 520,720 544,880 568,975 592,980 616,990 640,960 664,910 688,930 712,962 736,950 760,965"/>
<polyline stroke="#da70d6" stroke-width="1" points="40,945 64,930 88,880 112,800 136,730 160,715 184,715 208,745 232,810 256,880 280,955 304,945 328,880 352,810 376,755 400,695 424,655 448,640 472,630 496,640 520,700 544,770 568,860 592,925 616,920 640,870 664,842 688,842 712,860 736,915 760,955"/>
<polyline stroke="#000" stroke-width="1" points="40,883 64,890 88,815 112,805 136,840 160,782 184,820 208,890 232,925 256,958 280,960 304,802 328,835 352,805 376,750 400,730 424,738 448,680 472,652 496,770 520,830 544,840 568,905 592,820 616,750 640,840 664,800 688,840 712,840 736,905 760,903"/>
<polyline stroke="#00ff00" stroke-width="2.500" points="40,990 64,860 88,770 112,690 136,720 160,745 184,705 208,810 232,905 256,960 280,1000 304,925 328,790 352,705 376,665 400,640 424,632 448,628 472,624 496,665 520,790 544,910 568,972 592,958 616,830 640,755 664,850 688,940 712,940 736,932 760,962"/>
<polyline stroke="#f00" stroke-width="2.500" points="40,1010 64,830 88,725 112,675 136,725 160,748 184,688 208,840 232,930 256,985 280,1010 304,900 328,755 352,685 376,652 400,635 424,628 448,624 472,622 496,650 520,830 544,940 568,985 592,950 616,790 640,740 664,890 688,960 712,938 736,930 760,980"/>
</g>
<text class="o" x="992" y="543" textLength="313">TDI of Slow RSI  (2,1.24, 0.95) 24.5810 19.9495 15.3181 17.2383 12.9287</text>
<rect x="987.500" y="531.500" width="321" height="153" class="k"/>
<path class="k" d="M988.500 685v3M1052.500 685v3M1116.500 685v3M1180.500 685v3M1308 549.500h3M1308 590.500h3M1308 616.500h3M1308 641.500h3M1308 669.500h3"/>
<text class="t" x="1312" y="543">109.6451</text><text class="t" x="1312" y="553">98</text><text class="t" x="1312" y="561">93</text><text class="t" x="1312" y="567">88</text><text class="t" x="1312" y="574">83</text><text class="t" x="1312" y="581">78</text><text class="t" x="1312" y="587">73</text><text class="t" x="1312" y="594">68</text><text class="t" x="1312" y="620">50</text><text class="t" x="1312" y="645">32</text><text class="t" x="1312" y="652">27</text><text class="t" x="1312" y="659">22</text><text class="t" x="1312" y="666">17</text><text class="t" x="1312" y="673">12</text><text class="t" x="1312" y="680">7</text><text class="t" x="1312" y="682">-0.8645</text>
<text class="t" x="987" y="697">8 Feb 2019</text><text class="t" x="1051" y="697">11 Feb 12:00</text><text class="t" x="1115" y="697">12 Feb 20:00</text><text class="t" x="1179" y="697">14 Feb 04:00</text>

<!-- tab bar -->
<rect y="714" width="1366" height="2" fill="#8c8c8c"/>
<rect y="716" width="1366" height="22" fill="#f0f0f0"/>
<path d="M0 716.500H1366" stroke="#333"/>
<path d="M1.500 738V717" stroke="#fff"/>
<rect x="95.500" y="717.500" width="94" height="18" fill="#fff" stroke="#000"/>
<text x="18" y="731" font-size="12" fill="#808080" textLength="64">AUDUSD,H1</text>
<text x="107" y="731" font-size="12" fill="#000" textLength="71">AUDUSD,M15</text>
<text x="202" y="731" font-size="12" fill="#808080" textLength="64">AUDUSD,H4</text>
<text x="288" y="731" font-size="12" fill="#808080" textLength="75">AUDUSD,Daily</text>
<text x="384" y="731" font-size="12" fill="#808080" textLength="83">AUDUSD,Weekly</text>
<path d="M278.500 721v12M374.500 721v12M477.500 721v12" stroke="#999"/>
<path d="M1338 721l-5 5 5 5zM1352 721l5 5-5 5z" fill="#a0a0a0"/>
</svg>
</body></html>
